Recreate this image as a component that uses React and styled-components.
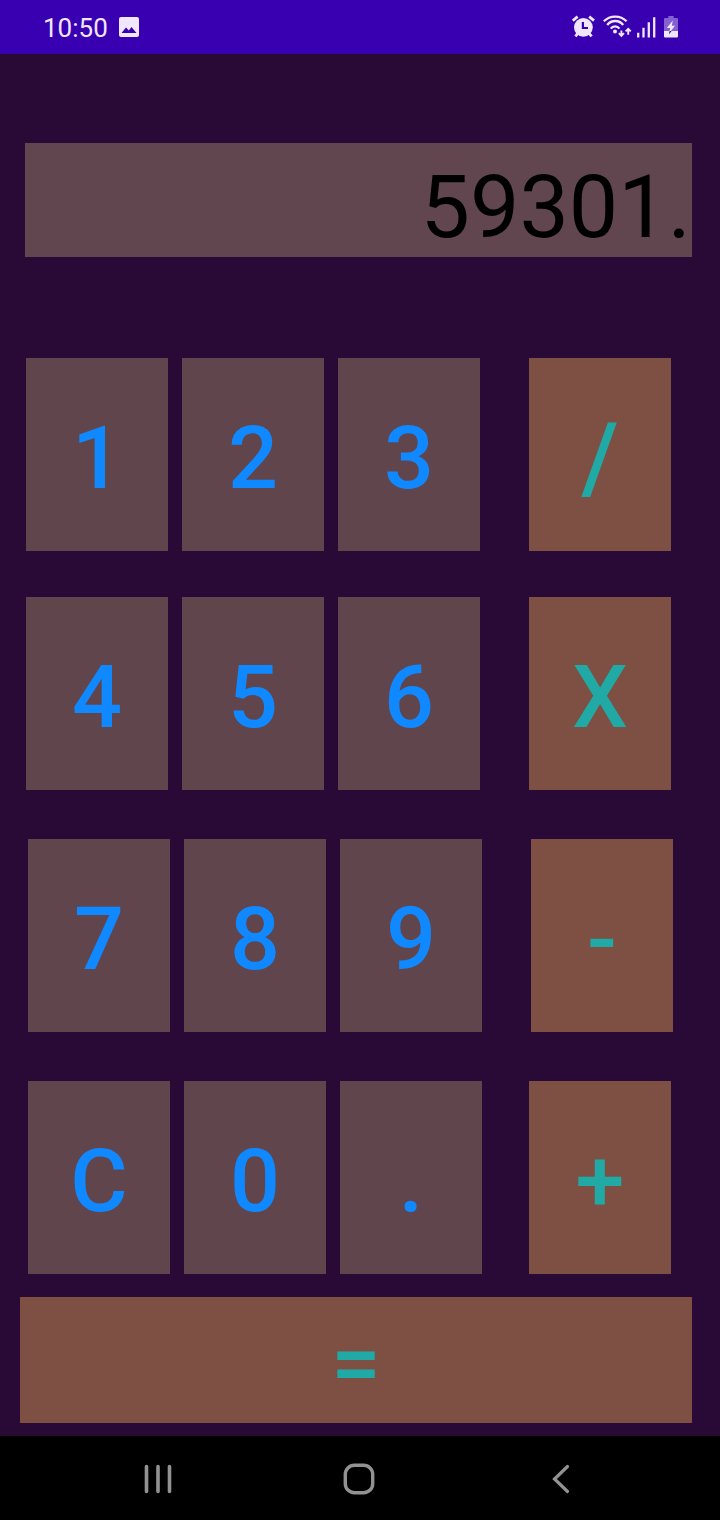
import React from "react";
import styled, { createGlobalStyle } from "styled-components";

const GlobalStyle = createGlobalStyle`
  * {
    box-sizing: border-box;
  }
  body {
    margin: 0;
    background: #290936;
    font-family: Roboto, "Liberation Sans", sans-serif;
  }
`;

const Screen = styled.div`
  display: flex;
  flex-direction: column;
  min-height: 100vh;
`;

const StatusBar = styled.header`
  display: flex;
  align-items: center;
  justify-content: space-between;
  height: 54px;
  padding: 0 41px 0 43px;
  background: #3800b1;
  color: #f1e6ff;
`;

const StatusGroup = styled.div`
  display: flex;
  align-items: center;
  gap: ${(p) => p.$gap}px;
`;

const Clock = styled.time`
  font-size: 26px;
  line-height: 30px;
  padding-top: 2px;
`;

const Icon = styled.svg`
  display: block;
  flex: none;
`;

const Calculator = styled.main`
  display: flex;
  flex-direction: column;
  flex: 1;
  padding: 89px 0 13px;
`;

const Display = styled.input`
  display: block;
  height: 114px;
  margin: 0 28px 101px 25px;
  padding: 12px 1px 0 0;
  border: 0;
  border-radius: 0;
  outline: 0;
  background: #61464f;
  color: #000;
  font: 400 88px / 100px Roboto, "Liberation Sans", sans-serif;
  text-align: right;
`;

const Keypad = styled.div`
  display: flex;
  flex-direction: column;
`;

const KeyRow = styled.div`
  display: flex;
  gap: 14px;
  padding: 0 ${(p) => p.$right}px 0 ${(p) => p.$left}px;
  margin-bottom: ${(p) => p.$below}px;
`;

const Key = styled.button`
  flex: 1 1 0;
  min-width: 0;
  padding: 48px 0 41px;
  border: 0;
  background: #60454c;
  color: #1088ff;
  font: 500 88px / 104px Roboto, "Liberation Sans", sans-serif;
  text-align: center;
  cursor: pointer;
`;

const OperatorKey = styled(Key)`
  margin-left: ${(p) => p.$offset}px;
  background: #7e5044;
  color: #20a9a5;
  font-size: ${(p) => p.$size || 88}px;
`;

const EqualsKey = styled(OperatorKey)`
  flex: none;
  margin: 0 28px 0 20px;
  padding: 14px 0 8px;
`;

const NavBar = styled.nav`
  display: grid;
  grid-template-columns: repeat(3, 1fr);
  height: 84px;
  padding: 0 58px 0 57px;
  background: #000;
`;

const NavButton = styled.button`
  display: flex;
  align-items: center;
  justify-content: center;
  padding: 2px 0 0;
  border: 0;
  background: none;
  color: #929292;
  cursor: pointer;
`;

const rows = [
  { keys: ["1", "2", "3"], op: "/", size: 96, left: 26, right: 49, offset: 35, below: 46 },
  { keys: ["4", "5", "6"], op: "X", left: 26, right: 49, offset: 35, below: 49 },
  { keys: ["7", "8", "9"], op: "-", left: 28, right: 47, offset: 35, below: 49 },
  { keys: ["C", "0", "."], op: "+", left: 28, right: 49, offset: 33, below: 23 },
];

function PictureIcon() {
  return (
    <Icon width="20" height="20" viewBox="0 0 20 20" aria-hidden="true">
      <rect width="20" height="20" rx="2" fill="currentColor" />
      <path d="M2.5 16 L7 10.5 L9.8 13.6 L12.5 10 L17.5 16 Z" fill="#3800b1" />
    </Icon>
  );
}

function AlarmIcon() {
  return (
    <Icon width="25" height="26" viewBox="1 0 25 26" aria-hidden="true">
      <circle cx="12.4" cy="13.3" r="9.4" fill="currentColor" />
      <g stroke="currentColor" strokeWidth="2.8" fill="none">
        <path d="M1.8 6.6 L6.6 2.6 M18.2 2.6 L23 6.6" />
        <path d="M4.4 22.4 L7.4 18.6 M20.6 22.4 L17.4 18.6" />
      </g>
      <path d="M11.9 8 V14 H17" stroke="#3800b1" strokeWidth="2.2" fill="none" />
    </Icon>
  );
}

function WifiIcon() {
  return (
    <Icon width="30" height="26" viewBox="0 0 30 26" aria-hidden="true">
      <g stroke="currentColor" strokeWidth="2.3" fill="none">
        <path d="M1.8 7.3 A16 16 0 0 1 24.6 7.3" />
        <path d="M5.2 11 A10 10 0 0 1 21.2 11" />
        <path d="M8.8 14.6 A5.2 5.2 0 0 1 17.4 14.6" />
        <path d="M19.4 16.4 V21.6 M16.8 19.2 L19.4 21.8 L22 19.2" strokeWidth="1.9" />
        <path d="M26.2 20.8 V15.2 M23.6 17.4 L26.2 14.8 L28.8 17.4" strokeWidth="1.9" />
      </g>
      <circle cx="13" cy="17.6" r="2" fill="currentColor" />
    </Icon>
  );
}

function SignalIcon() {
  return (
    <Icon width="21" height="26" viewBox="1 0 21 26" aria-hidden="true">
      <path
        d="M2.2 18.7 V23.4 M7.5 13.7 V23.4 M12.8 8.3 V23.4 M18.2 3.2 V23.4"
        stroke="currentColor"
        strokeWidth="2.3"
      />
    </Icon>
  );
}

function BatteryIcon() {
  return (
    <Icon width="16" height="26" viewBox="0 0 16 26" aria-hidden="true">
      <path d="M1 5 Q1 4 2 4 H5.3 V2 H10.7 V4 H14 Q15 4 15 5 V17 H1 Z" fill="#8461d3" />
      <path d="M1 17 H15 V22.4 Q15 23.4 14 23.4 H2 Q1 23.4 1 22.4 Z" fill="currentColor" />
      <path d="M9.8 6.6 L3.8 14 H7.2 L6 19.6 L12 11.8 H8.8 Z" fill="currentColor" />
      <path d="M6.6 17 L5.9 20.4 L8.6 17 Z" fill="#2b1a52" />
    </Icon>
  );
}

export default function App() {
  return (
    <Screen>
      <GlobalStyle />
      <StatusBar>
        <StatusGroup $gap={11}>
          <Clock>10:50</Clock>
          <PictureIcon />
        </StatusGroup>
        <StatusGroup $gap={5}>
          <AlarmIcon />
          <WifiIcon />
          <SignalIcon />
          <BatteryIcon />
        </StatusGroup>
      </StatusBar>
      <Calculator>
        <Display type="text" aria-label="Result" value="59301." readOnly />
        <Keypad>
          {rows.map((row) => (
            <KeyRow key={row.op} $left={row.left} $right={row.right} $below={row.below}>
              {row.keys.map((label) => (
                <Key key={label} type="button">
                  {label}
                </Key>
              ))}
              <OperatorKey type="button" $offset={row.offset} $size={row.size}>
                {row.op}
              </OperatorKey>
            </KeyRow>
          ))}
          <EqualsKey type="button">=</EqualsKey>
        </Keypad>
      </Calculator>
      <NavBar aria-label="System navigation">
        <NavButton type="button" aria-label="Recent apps">
          <Icon width="32" height="32" viewBox="0 0 32 32">
            <path
              d="M4.5 3.5 V28.5 M16 3.5 V28.5 M27.5 3.5 V28.5"
              stroke="currentColor"
              strokeWidth="3.6"
              strokeLinecap="round"
            />
          </Icon>
        </NavButton>
        <NavButton type="button" aria-label="Home">
          <Icon width="32" height="32" viewBox="0 0 32 32">
            <rect
              x="2.3"
              y="2.3"
              width="27.4"
              height="27.4"
              rx="9"
              fill="none"
              stroke="currentColor"
              strokeWidth="3.4"
            />
          </Icon>
        </NavButton>
        <NavButton type="button" aria-label="Back">
          <Icon width="32" height="32" viewBox="0 0 32 32">
            <path
              d="M22.5 3.5 L9.5 16 L22.5 28.5"
              fill="none"
              stroke="currentColor"
              strokeWidth="3.2"
              strokeLinecap="round"
            />
          </Icon>
        </NavButton>
      </NavBar>
    </Screen>
  );
}
